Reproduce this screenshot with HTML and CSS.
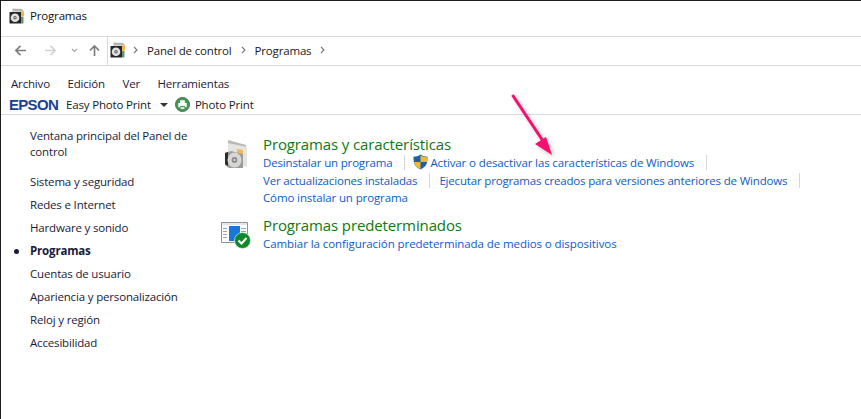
FILE: index.html
```html
<!DOCTYPE html>
<html lang="es">
<head>
<meta charset="utf-8">
<title>Programas</title>
<link rel="stylesheet" href="styles.css">
</head>
<body>
<svg class="defs" width="0" height="0" aria-hidden="true">
  <defs>
    <symbol id="prog" viewBox="0 0 16 16">
      <path d="M3.500 0.500l9.500 0.500 1.500 2v3h-11z" fill="#b5b5ae"/>
      <path d="M4 3h10v10H4z" fill="#d8d8d0"/>
      <path d="M11.500 3.500h3.500v5h-3.500z" fill="#f0b644"/>
      <path d="M0.500 4h11.500v11.500H0.500z" fill="#262626"/>
      <circle cx="6" cy="9.700" r="4.300" fill="#e2e2e2"/>
      <circle cx="6" cy="9.700" r="1.700" fill="#5a5a5a"/>
      <circle cx="6" cy="9.700" r="0.700" fill="#eee"/>
      <path d="M12 9h2.500v6.500H12z" fill="#6a9272"/>
    </symbol>
  </defs>
</svg>
<div class="window">
  <header class="titlebar">
    <svg class="icon16"><use href="#prog"/></svg>
    <span>Programas</span>
  </header>
  <nav class="navbar">
    <div class="navbtns">
      <svg class="nav-arrow" viewBox="0 0 14 14"><path d="M13 7H2M7 2L2 7l5 5" fill="none" stroke="#7d7d7d" stroke-width="1.800"/></svg>
      <svg class="nav-arrow fwd" viewBox="0 0 14 14"><path d="M1 7h11M7 2l5 5-5 5" fill="none" stroke="#d2d2d2" stroke-width="1.800"/></svg>
      <svg class="nav-chev" viewBox="0 0 7 5"><path d="M1 1l2.500 2.500L6 1" fill="none" stroke="#a8a8a8" stroke-width="1.200"/></svg>
      <svg class="nav-arrow up" viewBox="0 0 14 14"><path d="M7 13V2M2 7l5-5 5 5" fill="none" stroke="#7d7d7d" stroke-width="1.800"/></svg>
    </div>
    <div class="address">
      <svg class="icon16"><use href="#prog"/></svg>
      <svg class="crumb-sep first" viewBox="0 0 5 8"><path d="M1 1l3 3-3 3" fill="none" stroke="#777" stroke-width="1.100"/></svg>
      <span>Panel de control</span>
      <svg class="crumb-sep" viewBox="0 0 5 8"><path d="M1 1l3 3-3 3" fill="none" stroke="#777" stroke-width="1.100"/></svg>
      <span>Programas</span>
      <svg class="crumb-sep" viewBox="0 0 5 8"><path d="M1 1l3 3-3 3" fill="none" stroke="#777" stroke-width="1.100"/></svg>
    </div>
  </nav>
  <div class="menubar">
    <span>Archivo</span><span>Edición</span><span>Ver</span><span>Herramientas</span>
  </div>
  <div class="epsonbar">
    <span class="epson">EPSON</span>
    <span>Easy Photo Print</span>
    <span class="caret"></span>
    <svg class="printer" viewBox="0 0 16 16">
      <circle cx="8" cy="8" r="7.500" fill="#3f9a52" stroke="#56665a" stroke-width="1"/>
      <path d="M5.500 3.500h5v3h-5z" fill="#fff"/>
      <path d="M3.500 6.500h9v4.500h-2v-1.500h-5V11h-2z" fill="#fff"/>
      <path d="M5.500 10.500h5v2.500h-5z" fill="#fff" stroke="#2f7a3f" stroke-width="0.600"/>
    </svg>
    <span>Photo Print</span>
  </div>
  <div class="content">
    <aside class="sidebar">
      <a class="home">Ventana principal del Panel de control</a>
      <a>Sistema y seguridad</a>
      <a>Redes e Internet</a>
      <a>Hardware y sonido</a>
      <a class="current">Programas</a>
      <a>Cuentas de usuario</a>
      <a>Apariencia y personalización</a>
      <a>Reloj y región</a>
      <a>Accesibilidad</a>
    </aside>
    <main class="main">
      <section class="group">
        <svg class="icon36" viewBox="0 0 36 36">
          <path d="M7 4l18 5v3l-18-4z" fill="#b9b9b4"/>
          <path d="M7 7l19 4v20l-19-3z" fill="#e4e4e0"/>
          <path d="M16 13l6 1v9l-6-1z" fill="#f2b75a"/>
          <path d="M4 17l6-2 12 3v14H8l-4-3z" fill="#9c9c9c"/>
          <path d="M4 17l3-1v14l-3-2z" fill="#2c2c2c"/>
          <ellipse cx="13.500" cy="24" rx="7" ry="7.500" fill="#d6d6d4"/>
          <ellipse cx="13.500" cy="24" rx="2.800" ry="3" fill="#8a8a8a"/>
          <ellipse cx="13.500" cy="24" rx="1" ry="1.100" fill="#eee"/>
        </svg>
        <div class="group-body">
          <h2>Programas y características</h2>
          <div class="row">
            <a>Desinstalar un programa</a><i class="sep"></i>
            <svg class="shield" viewBox="0 0 15 16">
              <path d="M7.500 0.500C9.500 2 11.800 2.600 14.500 2.800c0 6-0.500 9.700-7 12.700C1 12.500 0.500 8.800 0.500 2.800 3.200 2.600 5.500 2 7.500 0.500z" fill="#1f5fa8"/>
              <path d="M7.500 8v7C3 13 1.500 11 1 8z" fill="#f4b733"/>
              <path d="M7.500 1.500c2 1.100 4.300 1.500 6.700 1.700 0 1.800 0 3.300-.2 4.800H7.500z" fill="#f4b733"/>
            </svg>
            <a class="link-wide">Activar o desactivar las características de Windows</a><i class="sep"></i>
          </div>
          <div class="row">
            <a>Ver actualizaciones instaladas</a><i class="sep"></i>
            <a>Ejecutar programas creados para versiones anteriores de Windows</a><i class="sep"></i>
          </div>
          <div class="row third-row">
            <a class="link-wide">Cómo instalar un programa</a>
          </div>
        </div>
      </section>
      <section class="group second">
        <svg class="icon36 def" viewBox="0 0 30 30">
          <path d="M.5 2.500h26v20H.5z" fill="#e4e6e8" stroke="#8d9398" stroke-width="1"/>
          <path d="M1 5h25v17H1z" fill="#fff"/>
          <path d="M8 6h11v15H8z" fill="#1579d8"/>
          <path d="M2 8h4v1H2zM2 11h4v1H2zM2 14h4v1H2zM2 17h4v1H2zM20 8h5v1h-5zM20 11h5v1h-5z" fill="#8fa8bd"/>
          <circle cx="21.500" cy="20.500" r="8" fill="#0f8a2a" stroke="#fff" stroke-width="0.600"/>
          <path d="M17.500 20.500l3 3 5-5.500" fill="none" stroke="#fff" stroke-width="2"/>
        </svg>
        <div class="group-body">
          <h2>Programas predeterminados</h2>
          <div class="row">
            <a class="link-wider">Cambiar la configuración predeterminada de medios o dispositivos</a>
          </div>
        </div>
      </section>
    </main>
  </div>
  <svg class="annot" viewBox="0 0 50 70" width="50" height="70">
    <path d="M1.500 1L34 50" stroke="#f5106f" stroke-width="3" fill="none"/>
    <path d="M24 50L35 43L41 61z" fill="#f5106f"/>
  </svg>
</div>
</body>
</html>
```
FILE: styles.css
```css
* { box-sizing: border-box; }
html, body { margin: 0; padding: 0; background: #fff; }
body {
  width: 861px;
  height: 419px;
  overflow: hidden;
  font-family: "Open Sans", "Noto Sans", sans-serif;
  font-size: 11.5px;
  letter-spacing: -0.17px;
  color: #1a1a1a;
}
.defs { position: absolute; }
.window {
  position: relative;
  height: 419px;
  border-top: 1px solid #1c1c1c;
  border-left: 1px solid #1c1c1c;
}
.icon16 { width: 16px; height: 16px; flex: none; }
.titlebar {
  height: 35px;
  display: flex;
  align-items: center;
  gap: 5px;
  padding: 0 0 6px 8px;
  color: #111;
}
.navbar {
  height: 30px;
  display: flex;
  border-top: 1px solid #d9d9d9;
  border-bottom: 1px solid #d9d9d9;
}
.navbtns {
  width: 106px;
  display: flex;
  align-items: center;
  padding: 0 0 2px 13px;
}
.nav-arrow { width: 13px; height: 13px; flex: none; }
.nav-arrow.fwd { margin-left: 17px; }
.nav-chev { width: 7px; height: 5px; margin-left: 14px; flex: none; }
.nav-arrow.up { margin-left: 10px; }
.address {
  flex: 1;
  display: flex;
  align-items: center;
  padding: 0 0 2px 2px;
  border-left: 1px solid #d9d9d9;
  color: #1a1a1a;
}
.crumb-sep { width: 5px; height: 8px; margin: 0 9px; flex: none; }
.crumb-sep.first { margin: 0 9px 0 7px; }
.menubar {
  height: 26px;
  display: flex;
  align-items: flex-end;
  gap: 17.5px;
  padding: 0 0 1px 10px;
  color: #1a1a3a;
}
.epsonbar {
  height: 23px;
  display: flex;
  align-items: center;
  padding: 2px 0 0 8px;
  border-bottom: 1px solid #d9d9d9;
}
.epson {
  font-family: "Liberation Sans", sans-serif;
  font-weight: 700;
  font-size: 15px;
  letter-spacing: -0.7px;
  color: #1c3f94;
  margin-right: 8px;
}
.caret {
  width: 0;
  height: 0;
  margin: 1px 7px 0 9px;
  border-left: 4px solid transparent;
  border-right: 4px solid transparent;
  border-top: 4px solid #333;
}
.printer { width: 15px; height: 15px; margin-right: 5px; flex: none; }
.content { display: flex; }
.sidebar {
  width: 216px;
  padding: 13px 0 0 29px;
  display: flex;
  flex-direction: column;
  color: #1a1a3a;
}
.sidebar a {
  display: block;
  line-height: 16px;
  margin-bottom: 7px;
}
.sidebar a.home { width: 170px; margin-bottom: 14px; }
.sidebar a.current { position: relative; font-weight: 700; }
.sidebar a.current::before {
  content: "";
  position: absolute;
  left: -16px;
  top: 6px;
  width: 5px;
  height: 5px;
  border-radius: 50%;
  background: #1a1a4a;
}
.main { flex: 1; padding-top: 21px; }
.group { display: flex; gap: 6px; padding-left: 4px; }
.group.second { margin-top: 11px; }
.icon36 { width: 36px; height: 36px; flex: none; }
.icon36.def { width: 30px; height: 30px; margin: 3px 6px 0 0; }
.group-body { flex: 1; }
h2 {
  margin: 0;
  font-size: 15px;
  font-weight: 400;
  line-height: 17px;
  letter-spacing: -0.12px;
  color: #0e7a0e;
}
.row {
  display: flex;
  align-items: center;
  height: 18px;
  color: #0b5cc8;
}
.third-row { margin-top: -1px; }
.link-wide { letter-spacing: -0.12px; }
.link-wider { letter-spacing: -0.08px; }
.sep {
  width: 1px;
  height: 15px;
  margin: 0 9px 0 12px;
  background: #d6d6d6;
}
.shield { width: 15px; height: 16px; margin: 0 2px 0 -1px; flex: none; }
.annot {
  position: absolute;
  left: 510px;
  top: 93px;
  filter: drop-shadow(2px 2px 2px rgba(0,0,0,.25));
}
```
